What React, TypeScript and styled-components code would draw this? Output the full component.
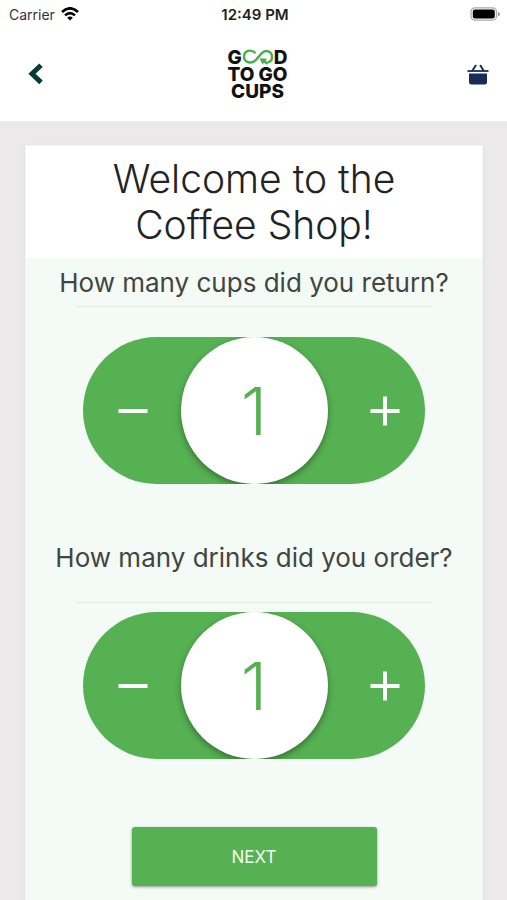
import React, { useState } from "react";
import styled, { createGlobalStyle } from "styled-components";

const green = "#56b152";

const GlobalStyle = createGlobalStyle`
  * { box-sizing: border-box; }
  body {
    margin: 0;
    background: #ebe9ea;
    color: #212324;
    font-family: Inter, "Liberation Sans", sans-serif;
  }
  button { font: inherit; border: 0; padding: 0; cursor: pointer; }
`;

const Screen = styled.div`
  min-height: 100vh;
  display: flex;
  flex-direction: column;
`;

const Top = styled.header`
  background: #fff;
  height: 121px;
`;

const StatusBar = styled.div`
  display: grid;
  grid-template-columns: 1fr auto 1fr;
  align-items: center;
  height: 28px;
  padding: 0 6px 0 9px;
  font-size: 14px;
`;

const Carrier = styled.div`
  display: flex;
  align-items: center;
  gap: 6px;
  color: #333;
`;

const Clock = styled.time`
  font-size: 15px;
  font-weight: 600;
  color: #222;
`;

const Battery = styled.svg`
  justify-self: end;
`;

const NavBar = styled.nav`
  display: grid;
  grid-template-columns: 1fr auto 1fr;
  align-items: center;
  height: 92px;
  padding: 0 16px 0 24px;
`;

const IconButton = styled.button<{ $end?: boolean }>`
  display: flex;
  background: none;
  justify-self: ${(p) => (p.$end ? "end" : "start")};
`;

const Logo = styled.div`
  display: flex;
  flex-direction: column;
  align-items: center;
  color: #111;
  font-size: 19px;
  line-height: 17px;
  font-weight: 800;
`;

const LogoRow = styled.div`
  display: flex;
  align-items: center;
`;

const Page = styled.main`
  flex: 1;
  display: flex;
  padding: 24px 24px 0 25px;
`;

const Card = styled.section`
  flex: 1;
  background: #f4faf6;
  border: 1px solid #f8f8f8;
  border-bottom: 0;
  box-shadow: 0 1px 3px rgba(0, 0, 0, 0.08);
`;

const Title = styled.h1`
  margin: 0;
  padding: 10px 60px;
  background: #fff;
  text-align: center;
  font-size: 39px;
  line-height: 46px;
  font-weight: 300;
`;

const Form = styled.form`
  display: flex;
  flex-direction: column;
  align-items: center;
`;

const Question = styled.section<{ $roomy?: boolean }>`
  width: 100%;
  display: flex;
  flex-direction: column;
  align-items: center;
  padding-top: ${(p) => (p.$roomy ? 56 : 7)}px;
`;

const Prompt = styled.h2`
  margin: 0;
  font-size: 26px;
  line-height: 36px;
  font-weight: 400;
  white-space: nowrap;
  color: #414642;
`;

const Rule = styled.hr<{ $roomy?: boolean }>`
  width: 78%;
  height: 1px;
  border: 0;
  background: #e7ece8;
  margin: ${(p) => (p.$roomy ? "26px 0 9px" : "5px 0 30px")};
`;

const Stepper = styled.div`
  display: grid;
  grid-template-columns: 1fr 147px 1fr;
  width: 75%;
  height: 147px;
  border-radius: 74px;
  background: ${green};
  overflow: hidden;
`;

const StepButton = styled.button<{ $plus?: boolean }>`
  display: flex;
  align-items: center;
  justify-content: center;
  padding-left: ${(p) => (p.$plus ? 18 : 2)}px;
  background: none;
`;

const Count = styled.output`
  display: flex;
  align-items: center;
  justify-content: center;
  border-radius: 50%;
  background: #fff;
  color: ${green};
  box-shadow: 0 3px 6px rgba(0, 0, 0, 0.36);
  font-size: 66px;
  font-weight: 300;
`;

const NextButton = styled.button`
  && {
    width: 245px;
    max-width: 90%;
    height: 59px;
    margin: 68px 0 15px;
    border-radius: 3px;
    background: ${green};
    color: #f4fff4;
    font-size: 17px;
    box-shadow: 0 1px 3px rgba(0, 0, 0, 0.4);
  }
`;

function StepIcon({ plus }: { plus?: boolean }) {
  return (
    <svg width="30" height="30" viewBox="0 0 30 30" fill="none" stroke="#fff" strokeWidth="4" aria-hidden="true">
      <path d={plus ? "M.5 15h29M15 .5v29" : "M.5 15h29"} />
    </svg>
  );
}

function Quantity({ prompt, roomy }: { prompt: string; roomy?: boolean }) {
  const [count, setCount] = useState(1);
  return (
    <Question $roomy={roomy} aria-label={prompt}>
      <Prompt>{prompt}</Prompt>
      <Rule $roomy={roomy} />
      <Stepper>
        <StepButton type="button" aria-label="Decrease" onClick={() => setCount(Math.max(0, count - 1))}>
          <StepIcon />
        </StepButton>
        <Count aria-label={prompt}>{count}</Count>
        <StepButton type="button" aria-label="Increase" $plus onClick={() => setCount(count + 1)}>
          <StepIcon plus />
        </StepButton>
      </Stepper>
    </Question>
  );
}

export default function App() {
  return (
    <Screen>
      <GlobalStyle />
      <Top>
        <StatusBar>
          <Carrier>
            Carrier
            <svg width="18" height="14" viewBox="0 0 18 14" fill="none" stroke="#000" strokeWidth="2.6" aria-hidden="true">
              <path d="M1 5Q9-2.4 17 5M4 8.4q5-4.6 10 0" />
              <path d="M9 13.6 6.2 10.8q2.8-2.4 5.6 0z" fill="#000" stroke="none" />
            </svg>
          </Carrier>
          <Clock>12:49 PM</Clock>
          <Battery width="31" height="14" viewBox="0 0 31 14" aria-hidden="true">
            <rect x="1" y=".8" width="25.5" height="12.4" rx="4" fill="#fff" stroke="#aaa" strokeWidth="1.3" />
            <rect x="2.8" y="2.5" width="22" height="9" rx="2.2" fill="#000" />
            <path d="M28 5v4.4q2-.6 2-2.2T28 5" fill="#999" />
          </Battery>
        </StatusBar>
        <NavBar>
          <IconButton type="button" aria-label="Back">
            <svg width="20" height="24" viewBox="0 0 20 24" fill="none" stroke="#053c38" strokeWidth="5" aria-hidden="true">
              <path d="M17 3.2 8 11.8l9 8.6" />
            </svg>
          </IconButton>
          <Logo>
            <LogoRow>
              <span>G</span>
              <svg width="32" height="16" viewBox="0 0 32 16" fill="none" stroke="#48b04a" strokeWidth="2.4" aria-hidden="true">
                <path d="M13.500 4.200C9-.6 2 1.800 2 7.800c0 6.200 8 7.200 11.600 3.400l6-6.800C23.500 0 30 2 30 8c0 3-2 5-4.600 5.400" />
                <path d="M17.500 9.200 25 9.800l-1.200 2 2.600 2.400-1.600 1.600-2.800-2-1.500 1.800z" fill="#48b04a" stroke="none" />
              </svg>
              <span>D</span>
            </LogoRow>
            <LogoRow>TO GO</LogoRow>
            <LogoRow>CUPS</LogoRow>
          </Logo>
          <IconButton type="button" aria-label="Basket" $end>
            <svg width="26" height="24" viewBox="0 0 26 24" fill="none" stroke="#192c55" aria-hidden="true">
              <path d="M2.500 9h21" strokeWidth="1.800" />
              <path d="M7.500 8.500 11 3M18.500 8.500 15.200 3" strokeWidth="2" />
              <path d="M4 11.500h18v8.500q0 2.500-2.500 2.500h-13Q4 22.500 4 20z" fill="#192c55" stroke="none" />
            </svg>
          </IconButton>
        </NavBar>
      </Top>
      <Page>
        <Card>
          <Title>Welcome to the Coffee Shop!</Title>
          <Form onSubmit={(e: React.FormEvent) => e.preventDefault()}>
            <Quantity prompt="How many cups did you return?" />
            <Quantity prompt="How many drinks did you order?" roomy />
            <NextButton type="submit">NEXT</NextButton>
          </Form>
        </Card>
      </Page>
    </Screen>
  );
}
